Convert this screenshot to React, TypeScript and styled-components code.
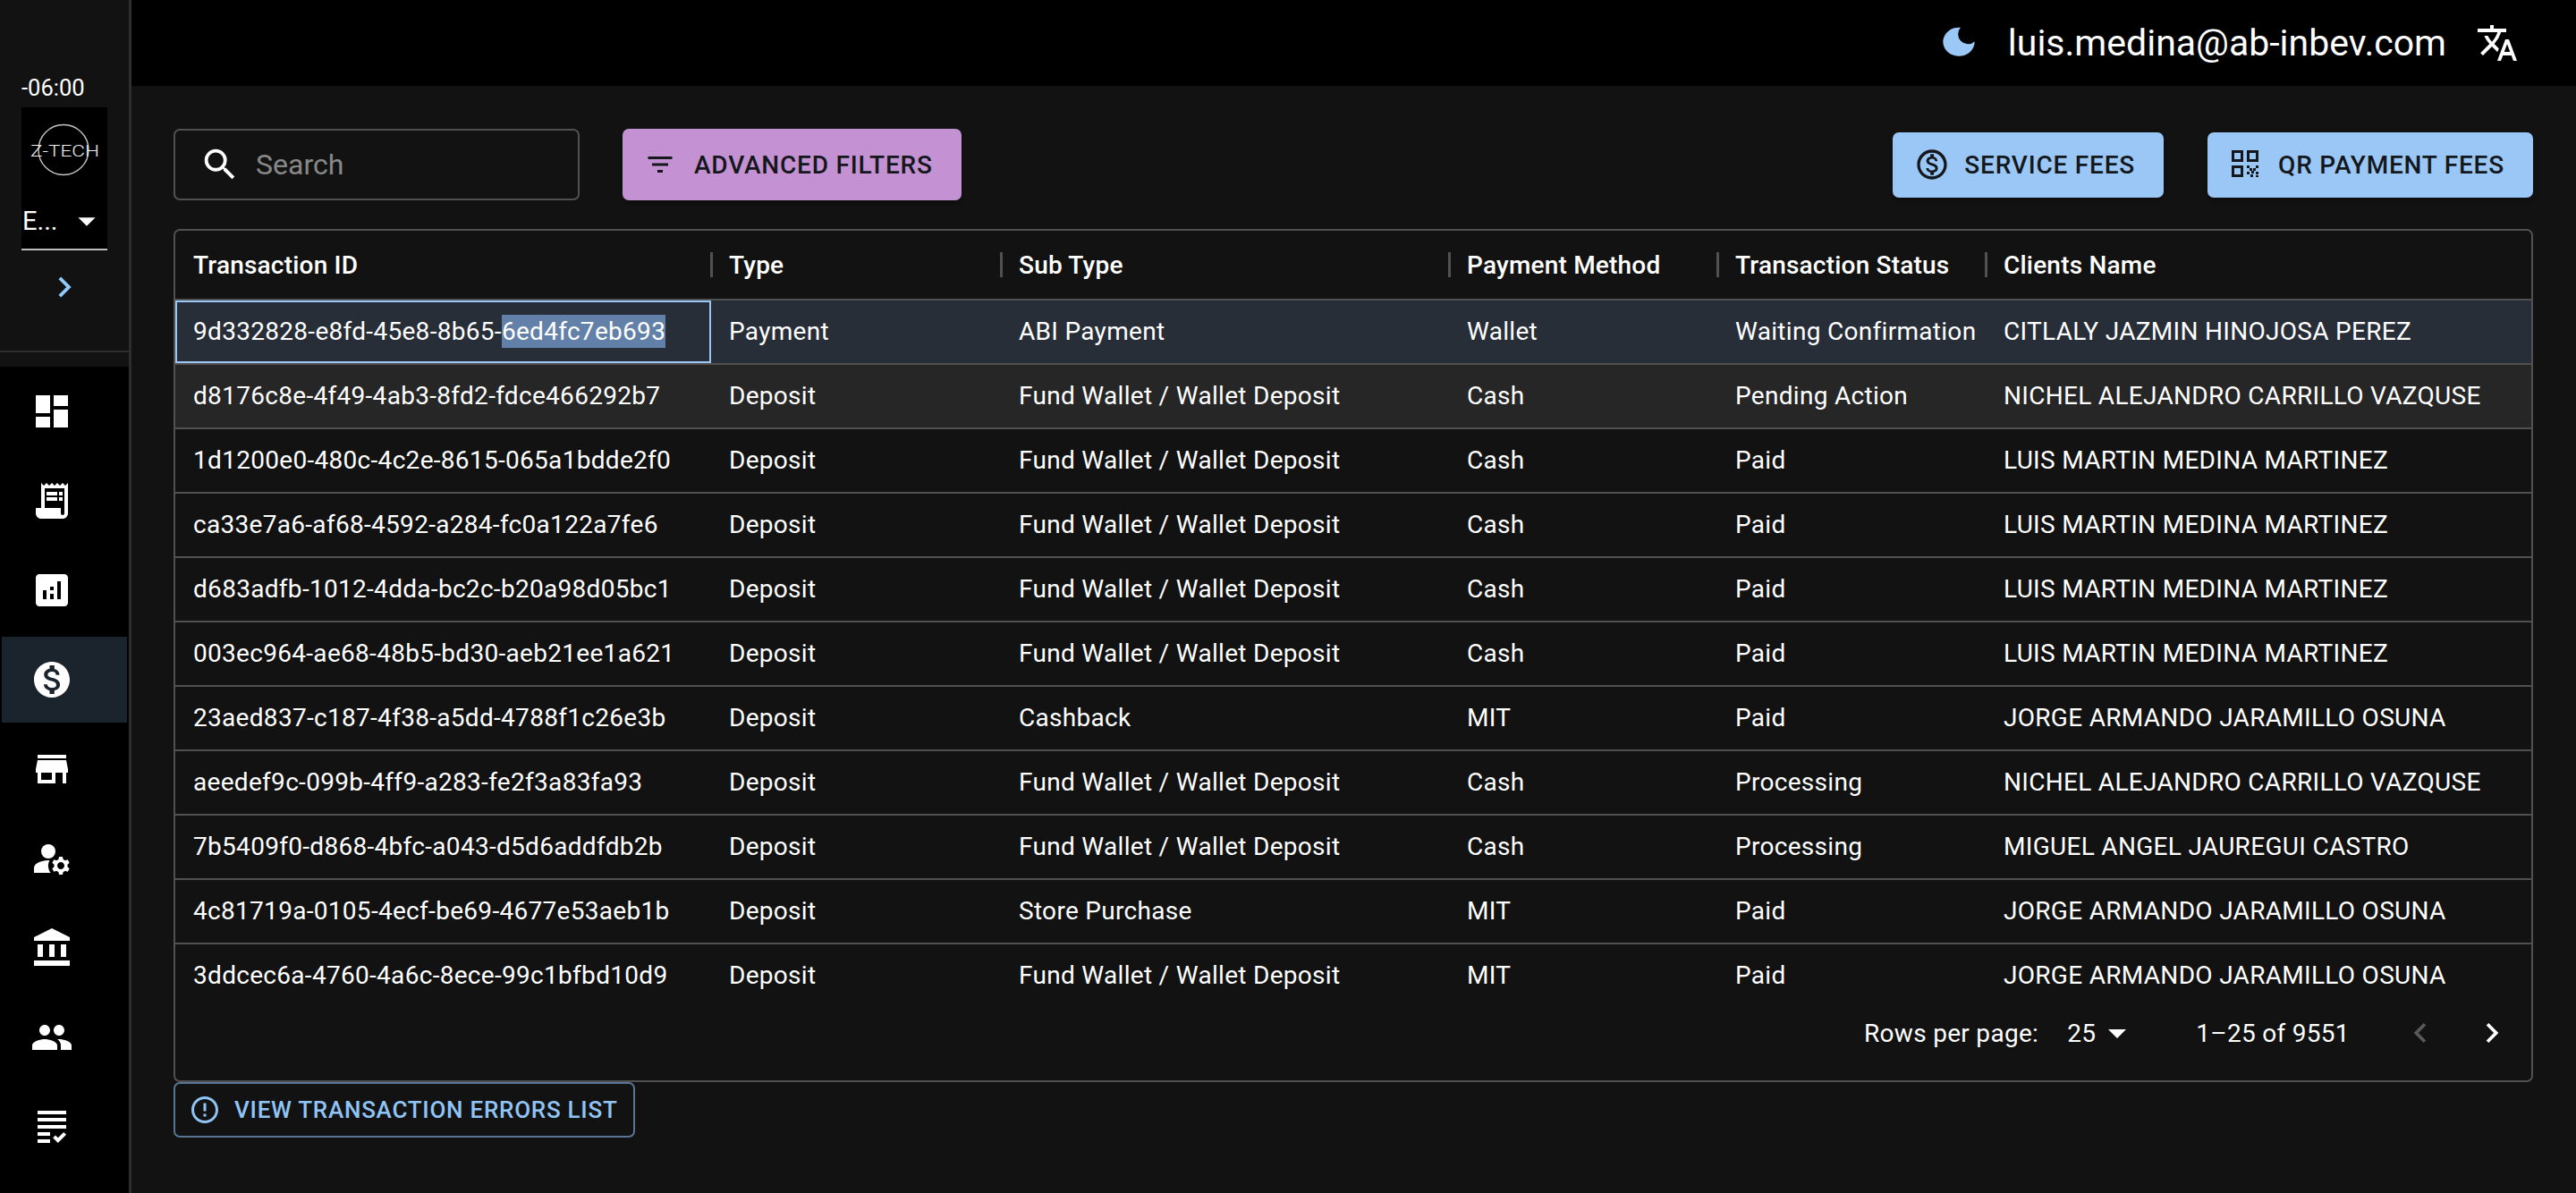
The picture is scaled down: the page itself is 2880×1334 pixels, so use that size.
import styled, { createGlobalStyle } from "styled-components";
import {
  MdAccountBalance,
  MdAnalytics,
  MdArrowDropDown,
  MdChevronLeft,
  MdChevronRight,
  MdDashboard,
  MdErrorOutline,
  MdFilterList,
  MdGrading,
  MdManageAccounts,
  MdMonetizationOn,
  MdOutlineMonetizationOn,
  MdPeople,
  MdReceiptLong,
  MdSearch,
  MdStore,
  MdTranslate,
} from "react-icons/md";

const columns = ["Transaction ID", "Type", "Sub Type", "Payment Method", "Transaction Status", "Clients Name"];

const rows = [
  ["9d332828-e8fd-45e8-8b65-6ed4fc7eb693", "Payment", "ABI Payment", "Wallet", "Waiting Confirmation", "CITLALY JAZMIN HINOJOSA PEREZ"],
  ["d8176c8e-4f49-4ab3-8fd2-fdce466292b7", "Deposit", "Fund Wallet / Wallet Deposit", "Cash", "Pending Action", "NICHEL ALEJANDRO CARRILLO VAZQUSE"],
  ["1d1200e0-480c-4c2e-8615-065a1bdde2f0", "Deposit", "Fund Wallet / Wallet Deposit", "Cash", "Paid", "LUIS MARTIN MEDINA MARTINEZ"],
  ["ca33e7a6-af68-4592-a284-fc0a122a7fe6", "Deposit", "Fund Wallet / Wallet Deposit", "Cash", "Paid", "LUIS MARTIN MEDINA MARTINEZ"],
  ["d683adfb-1012-4dda-bc2c-b20a98d05bc1", "Deposit", "Fund Wallet / Wallet Deposit", "Cash", "Paid", "LUIS MARTIN MEDINA MARTINEZ"],
  ["003ec964-ae68-48b5-bd30-aeb21ee1a621", "Deposit", "Fund Wallet / Wallet Deposit", "Cash", "Paid", "LUIS MARTIN MEDINA MARTINEZ"],
  ["23aed837-c187-4f38-a5dd-4788f1c26e3b", "Deposit", "Cashback", "MIT", "Paid", "JORGE ARMANDO JARAMILLO OSUNA"],
  ["aeedef9c-099b-4ff9-a283-fe2f3a83fa93", "Deposit", "Fund Wallet / Wallet Deposit", "Cash", "Processing", "NICHEL ALEJANDRO CARRILLO VAZQUSE"],
  ["7b5409f0-d868-4bfc-a043-d5d6addfdb2b", "Deposit", "Fund Wallet / Wallet Deposit", "Cash", "Processing", "MIGUEL ANGEL JAUREGUI CASTRO"],
  ["4c81719a-0105-4ecf-be69-4677e53aeb1b", "Deposit", "Store Purchase", "MIT", "Paid", "JORGE ARMANDO JARAMILLO OSUNA"],
  ["3ddcec6a-4760-4a6c-8ece-99c1bfbd10d9", "Deposit", "Fund Wallet / Wallet Deposit", "MIT", "Paid", "JORGE ARMANDO JARAMILLO OSUNA"],
];

const navItems = [
  MdDashboard,
  MdReceiptLong,
  MdAnalytics,
  MdMonetizationOn,
  MdStore,
  MdManageAccounts,
  MdAccountBalance,
  MdPeople,
  MdGrading,
];

const GlobalStyle = createGlobalStyle`
  html, body {
    margin: 0;
    padding: 0;
    background: #121212;
    overflow: hidden;
  }
  * {
    box-sizing: border-box;
  }
  body {
    font-family: Roboto, "Liberation Sans", sans-serif;
    color: #fff;
  }
`;

const Shell = styled.div`
  display: flex;
  width: 2880px;
  height: 1334px;
`;

const Sidebar = styled.aside`
  width: 147px;
  flex: none;
  display: flex;
  flex-direction: column;
  border-right: 3px solid #2e2e2e;
`;

const SideTop = styled.div`
  height: 394px;
  padding: 82px 24px 0;
  border-bottom: 2px solid #2e2e2e;
`;

const Offset = styled.div`
  height: 38px;
  font-size: 25.5px;
  line-height: 32px;
`;

const LogoBox = styled.div`
  width: 96px;
  height: 95px;
  background: #000;
  display: flex;
  align-items: center;
  justify-content: center;
`;

const CompanySelect = styled.div`
  width: 96px;
  height: 65px;
  background: #000;
  border-bottom: 2px solid #bdbdbd;
  display: flex;
  align-items: center;
  justify-content: space-between;
  font-size: 29px;
  padding-left: 1px;
`;

const Expand = styled.div`
  display: flex;
  justify-content: center;
  margin-top: 18px;
  color: #90caf9;
`;

const SideNav = styled.nav`
  margin-top: 16px;
  flex: 1;
  background: #000;
  display: flex;
  flex-direction: column;
  gap: 4px;
  padding-top: 2px;
`;

const NavItem = styled.div<{ $active?: boolean }>`
  height: 96px;
  margin: 0 2px;
  padding-left: 32px;
  display: flex;
  align-items: center;
  background: ${(p) => (p.$active ? "#1b242c" : "transparent")};
  color: #fff;
`;

const Main = styled.main`
  flex: 1;
  min-width: 0;
  display: flex;
  flex-direction: column;
`;

const TopBar = styled.header`
  height: 96px;
  background: #000;
  display: flex;
  align-items: center;
  justify-content: flex-end;
  padding-right: 64px;
`;

const MoonIcon = styled.svg`
  flex: none;
  margin-right: 37px;
  margin-top: -4px;
`;

const Email = styled.span`
  font-size: 41px;
  line-height: 48px;
  margin-right: 33px;
`;

const Content = styled.div`
  padding: 48px 48px 0 47px;
`;

const Toolbar = styled.div`
  display: flex;
  align-items: center;
  height: 80px;
  margin-bottom: 32px;
`;

const SearchBox = styled.div`
  width: 454px;
  height: 80px;
  border: 2px solid #515151;
  border-radius: 7px;
  display: flex;
  align-items: center;
  gap: 17px;
  padding-left: 27px;
  font-size: 32px;
  color: rgba(255, 255, 255, 0.5);

  svg {
    color: #fff;
  }
`;

const ActionButton = styled.button<{ $purple?: boolean }>`
  border: none;
  border-radius: 7px;
  height: ${(p) => (p.$purple ? "80px" : "73px")};
  background: ${(p) => (p.$purple ? "#c492d2" : "#9ac7f5")};
  color: #14181d;
  font-family: inherit;
  font-size: 28px;
  font-weight: 500;
  letter-spacing: 0.8px;
  text-transform: uppercase;
  display: flex;
  align-items: center;
  padding: 0 32px 0 24px;
  gap: 16px;
  box-shadow: 0 3px 4px rgba(0, 0, 0, 0.3);
`;

const FilterButton = styled(ActionButton)`
  margin-left: 48px;
  margin-right: auto;
  gap: 20px;
`;

const FeeButton = styled(ActionButton)`
  margin-left: 49px;
`;

const QrButton = styled(FeeButton)`
  padding-left: 27px;
  gap: 20px;
`;

const TableFrame = styled.section`
  height: 954px;
  border: 2px solid #515151;
  border-radius: 7px;
  overflow: hidden;
  display: flex;
  flex-direction: column;
`;

const Row = styled.div<{ $bg?: string }>`
  display: grid;
  grid-template-columns: 599px 324px 501px 300px 300px 1fr;
  height: 72px;
  border-bottom: 2px solid #515151;
  background: ${(p) => p.$bg || "transparent"};
`;

const HeadRow = styled(Row)`
  height: 78px;
`;

const HeadCell = styled.div`
  display: flex;
  align-items: center;
  justify-content: space-between;
  padding-left: 20px;
  font-size: 28px;
  font-weight: 500;
  letter-spacing: 0.2px;
`;

const Separator = styled.span`
  width: 3px;
  height: 28px;
  margin-right: -2px;
  background: #515151;
`;

const RowsArea = styled.div`
  height: 780px;
  overflow: hidden;
`;

const Cell = styled.div<{ $focused?: boolean }>`
  display: flex;
  align-items: center;
  padding-left: 20px;
  font-size: 28px;
  letter-spacing: 0.3px;
  white-space: nowrap;
  padding-bottom: 2px;
  ${(p) => (p.$focused ? "outline: 2px solid #9ac7f5; outline-offset: -2px;" : "")}
`;

const Selected = styled.span`
  background: #6381a8;
  padding: 2px 0;
`;

const Footer = styled.div`
  height: 92px;
  padding-bottom: 14px;
  display: flex;
  align-items: center;
  font-size: 28px;
  letter-spacing: 0.3px;
`;

const RowsLabel = styled.span`
  margin-left: 1888px;
`;

const PageSize = styled.span`
  display: flex;
  align-items: center;
  margin-left: 32px;
  width: 113px;
`;

const Range = styled.span`
  width: 229px;
  margin-left: 31px;
`;

const PageArrow = styled.span<{ $disabled?: boolean }>`
  display: flex;
  color: ${(p) => (p.$disabled ? "#595959" : "#fff")};
  margin-left: ${(p) => (p.$disabled ? "0" : "36px")};
`;

const ErrorsButton = styled.button`
  height: 62px;
  width: 516px;
  background: transparent;
  border: 2px solid #587694;
  border-radius: 7px;
  color: #90c4f5;
  font-family: inherit;
  font-size: 26px;
  font-weight: 500;
  letter-spacing: 0.74px;
  text-transform: uppercase;
  display: flex;
  align-items: center;
  gap: 15px;
  padding: 0 0 0 15px;
`;

const LogoMark = () => (
  <svg width="96" height="95" viewBox="0 0 96 95" fill="none">
    <circle cx="47" cy="47.5" r="28" stroke="#c4c4c4" strokeWidth="1.4" />
    <text
      x="10"
      y="55"
      textLength="77"
      lengthAdjust="spacingAndGlyphs"
      fill="#eeeeee"
      fontFamily="Roboto, sans-serif"
      fontWeight="300"
      fontSize="18"
    >
      Z-TECH
    </text>
  </svg>
);

const Moon = () => (
  <MoonIcon width="36" height="33" viewBox="0 0 110 100" fill="#9bc9f7">
    <path d="M61 2A54 49 0 1 0 109 50A34 34 0 0 1 61 2Z" />
  </MoonIcon>
);

const QrIcon = () => (
  <svg width="32" height="32" viewBox="0 0 32 32" fill="#14181d">
    <g fill="none" stroke="#14181d" strokeWidth="3">
      <rect x="1.5" y="1.5" width="10" height="10" />
      <rect x="18.5" y="1.5" width="10" height="10" />
      <rect x="1.5" y="18.5" width="10" height="10" />
    </g>
    <rect x="17" y="17" width="3" height="3" />
    <rect x="27" y="17" width="3" height="3" />
    <rect x="20" y="20" width="3" height="3" />
    <rect x="24" y="20" width="3" height="3" />
    <rect x="22" y="23" width="3" height="3" />
    <rect x="17" y="24" width="3" height="3" />
    <rect x="27" y="24" width="3" height="3" />
    <rect x="21" y="27" width="3" height="3" />
    <rect x="27" y="28" width="3" height="2" />
  </svg>
);

const App = () => (
  <Shell>
    <GlobalStyle />
    <Sidebar>
      <SideTop>
        <Offset>-06:00</Offset>
        <LogoBox>
          <LogoMark />
        </LogoBox>
        <CompanySelect>
          E...
          <MdArrowDropDown size={46} />
        </CompanySelect>
        <Expand>
          <MdChevronRight size={46} />
        </Expand>
      </SideTop>
      <SideNav>
        {navItems.map((Icon, i) => (
          <NavItem key={i} $active={i === 3}>
            <Icon size={48} />
          </NavItem>
        ))}
      </SideNav>
    </Sidebar>
    <Main>
      <TopBar>
        <Moon />
        <Email>luis.medina@ab-inbev.com</Email>
        <MdTranslate size={48} />
      </TopBar>
      <Content>
        <Toolbar>
          <SearchBox>
            <MdSearch size={46} />
            Search
          </SearchBox>
          <FilterButton $purple>
            <MdFilterList size={36} />
            Advanced Filters
          </FilterButton>
          <FeeButton>
            <MdOutlineMonetizationOn size={40} />
            Service Fees
          </FeeButton>
          <QrButton>
            <QrIcon />
            QR Payment Fees
          </QrButton>
        </Toolbar>
        <TableFrame>
          <HeadRow>
            {columns.map((c, i) => (
              <HeadCell key={c}>
                {c}
                {i < columns.length - 1 && <Separator />}
              </HeadCell>
            ))}
          </HeadRow>
          <RowsArea>
            {rows.map((r, i) => (
              <Row key={r[0]} $bg={i === 0 ? "#272e38" : i === 1 ? "#262626" : undefined}>
                {r.map((v, j) => (
                  <Cell key={j} $focused={i === 0 && j === 0}>
                    {i === 0 && j === 0 ? (
                      <span>
                        {v.slice(0, 24)}
                        <Selected>{v.slice(24)}</Selected>
                      </span>
                    ) : (
                      v
                    )}
                  </Cell>
                ))}
              </Row>
            ))}
          </RowsArea>
          <Footer>
            <RowsLabel>Rows per page:</RowsLabel>
            <PageSize>
              25
              <MdArrowDropDown size={48} />
            </PageSize>
            <Range>1–25 of 9551</Range>
            <PageArrow $disabled>
              <MdChevronLeft size={44} />
            </PageArrow>
            <PageArrow>
              <MdChevronRight size={44} />
            </PageArrow>
          </Footer>
        </TableFrame>
        <ErrorsButton>
          <MdErrorOutline size={36} />
          View Transaction Errors List
        </ErrorsButton>
      </Content>
    </Main>
  </Shell>
);

export default App;
